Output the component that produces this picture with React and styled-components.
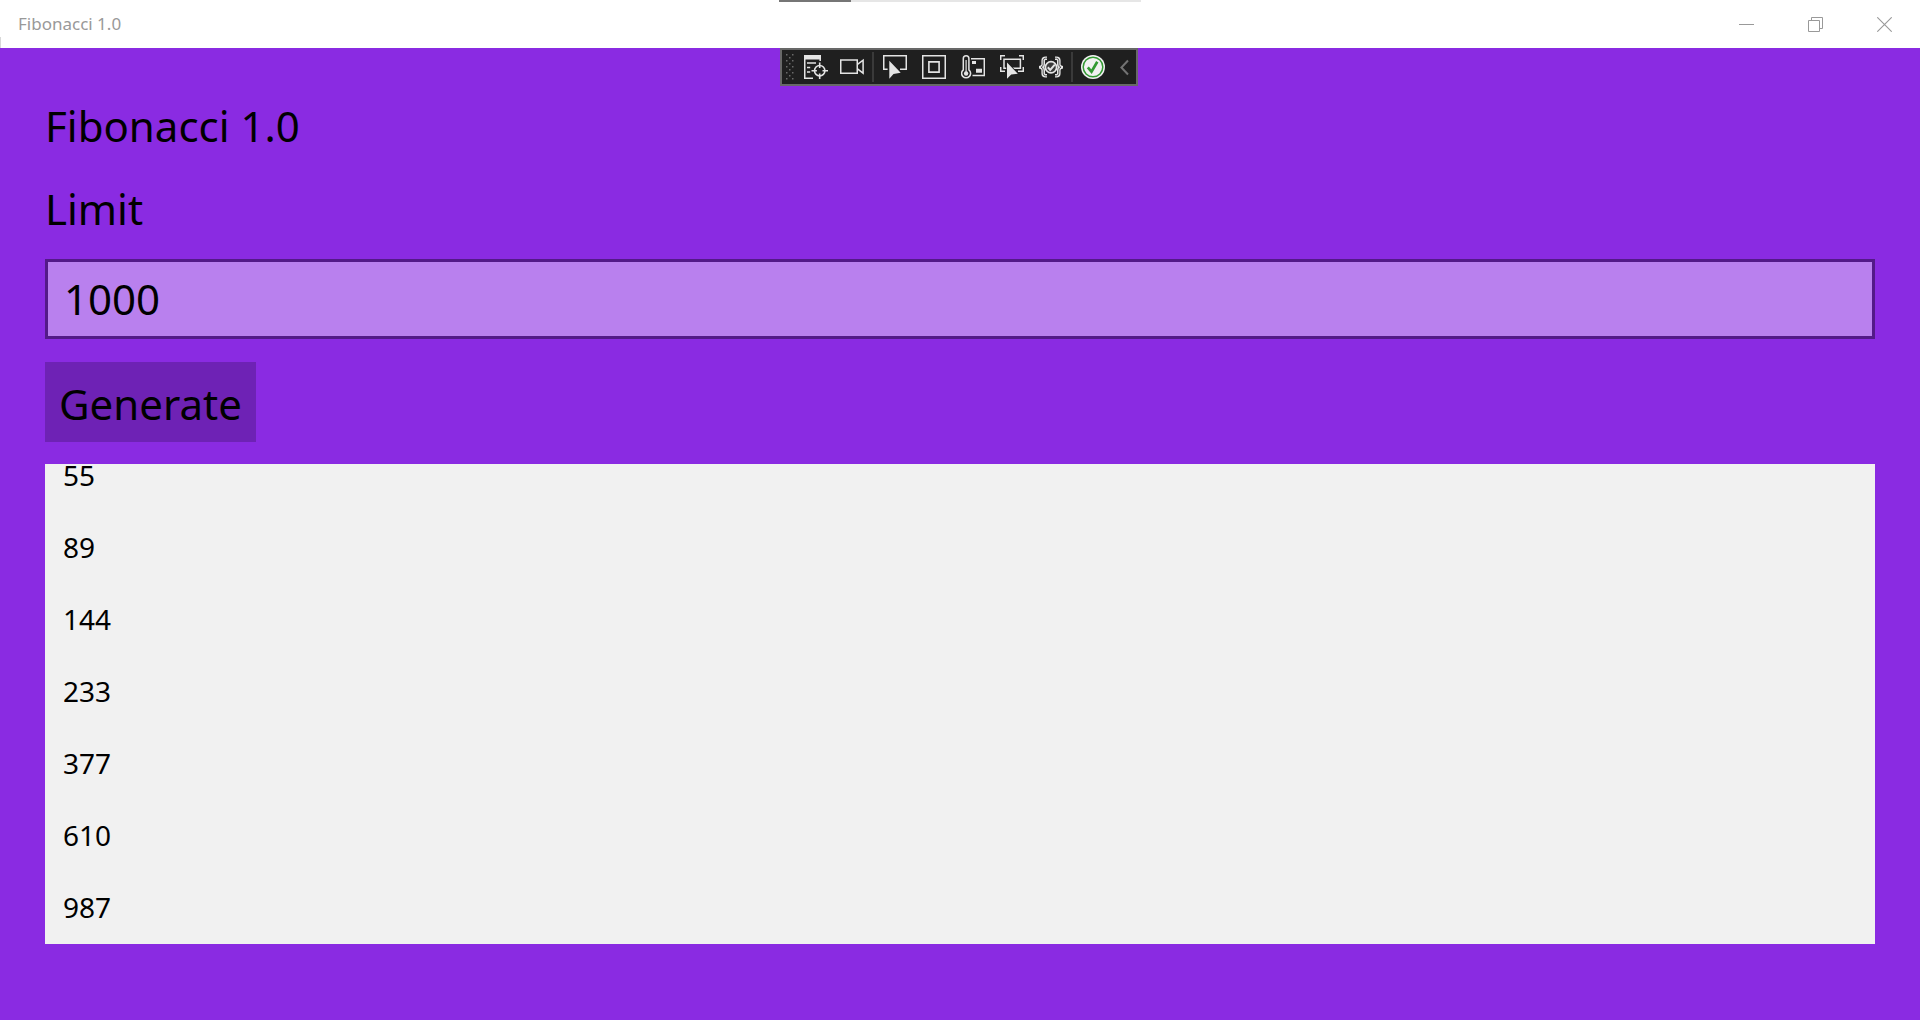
import React, { useState } from "react";
import styled, { createGlobalStyle } from "styled-components";

const GlobalStyle = createGlobalStyle`
  *, *::before, *::after { box-sizing: border-box; }
  body { margin: 0; }
  button, input { font-family: inherit; }
`;

const Window = styled.div`
  position: relative;
  display: flex;
  flex-direction: column;
  height: 100vh;
  background: #8a2be2;
  color: #000;
  font-family: "Noto Sans", "Open Sans", sans-serif;
`;

const TitleBar = styled.header`
  position: relative;
  display: flex;
  align-items: center;
  justify-content: space-between;
  flex: none;
  height: 48px;
  padding: 0 1px 0 18px;
  background: #fff;

  &::after {
    content: "";
    position: absolute;
    left: 0;
    bottom: 0;
    width: 1px;
    height: 11px;
    background: #d8d8d8;
  }
`;

const WindowTitle = styled.span`
  font-size: 17px;
  line-height: 24px;
  color: #999;
`;

const WindowButtons = styled.div`
  display: flex;
`;

const WindowButton = styled.button`
  display: flex;
  align-items: center;
  justify-content: center;
  width: 69px;
  height: 48px;
  padding: 0;
  border: 0;
  background: transparent;
  color: #999;
`;

const Overlay = styled.div`
  position: absolute;
  top: 48px;
  left: 50%;
  width: 360px;
  transform: translateX(-50%);
`;

const LoadTrack = styled.div`
  position: absolute;
  top: 0;
  left: 50%;
  width: 362px;
  height: 2px;
  transform: translateX(-50%);
  background: #e6e6e6;
`;

const LoadValue = styled.div`
  width: 20%;
  height: 2px;
  background: #767676;
`;

const DebugBar = styled.div`
  display: flex;
  align-items: center;
  width: 358px;
  height: 38px;
  padding-left: 3px;
  border: 2px solid #686868;
  background: #1f1f1f;

  > * {
    flex: none;
  }
`;

const ToolGroup = styled.div`
  display: flex;
  gap: ${(p) => p.$gap}px;
  padding: 0 8px 0 ${(p) => p.$start}px;
`;

const ToolButton = styled.button`
  display: flex;
  padding: 0;
  border: 0;
  background: transparent;
  color: #e4e4e4;
`;

const Divider = styled.div`
  width: 2px;
  height: 30px;
  background: #3a3a3a;
`;

const Page = styled.main`
  display: flex;
  flex-direction: column;
  align-items: flex-start;
  flex: 1;
  min-height: 0;
  padding: 48px 45px 76px;
`;

const Heading = styled.h1`
  margin: 0 0 23px;
  font-size: 42px;
  font-weight: 400;
  line-height: 60px;
`;

const FieldLabel = styled.label`
  margin-bottom: 20px;
  font-size: 42px;
  line-height: 60px;
`;

const LimitInput = styled.input`
  width: 100%;
  height: 80px;
  margin-bottom: 23px;
  padding: 0 16px 2px;
  border: 3px solid #531a88;
  border-radius: 0;
  outline: 0;
  background: #b980ee;
  color: #000;
  font-size: 42px;
`;

const GenerateButton = styled.button`
  height: 80px;
  margin-bottom: 22px;
  padding: 2px 14px 0;
  border: 0;
  background: #6e22b5;
  color: #000;
  font-size: 42px;
`;

const Results = styled.ul`
  display: flex;
  flex-direction: column;
  justify-content: flex-end;
  align-self: stretch;
  flex: 1 1 0;
  min-height: 0;
  margin: 0;
  padding: 0;
  overflow: hidden;
  background: #f1f1f1;
  list-style: none;
`;

const ResultRow = styled.li`
  flex: none;
  padding: 0 18px 2px;
  font-size: 28px;
  line-height: 70px;
`;

const Icon = ({ children, width = 24, height = 24 }) => (
  <svg
    width={width}
    height={height}
    viewBox={`0 0 ${width} ${height}`}
    fill="none"
    stroke="currentColor"
    strokeWidth="1.5"
    aria-hidden="true"
  >
    {children}
  </svg>
);

const GripDots = () => (
  <Icon width={9} height={26}>
    <g fill="#6a6a6a" stroke="none">
      {[0, 6, 12, 18, 24].map((y) => (
        <g key={y}>
          <rect x="1" y={y} width="1.5" height="1.5" />
          <rect x="7" y={y} width="1.5" height="1.5" />
          {y < 24 && <rect x="4" y={y + 3} width="1.5" height="1.5" />}
        </g>
      ))}
    </g>
  </Icon>
);

const TreeIcon = () => (
  <Icon>
    <rect x="0" y="0" width="17" height="4.5" fill="currentColor" stroke="none" />
    <path d="M.75 4v19.2H9M16.2 4v2M3 8h9M3 12.6h3.2M3 17h3.2" />
    <circle cx="15.7" cy="15.7" r="5.2" strokeWidth="1.6" />
    <path d="M15.7 7.5v5.4M15.7 18.5V24M7.5 15.7h5.4M18.5 15.7H24" strokeWidth="1.6" />
  </Icon>
);

const CameraIcon = () => (
  <Icon>
    <path d="M.75 5h16.5v13.2H.75z" />
    <path d="M17.5 9.4l5.6-4.2v13l-5.6-4.4" />
  </Icon>
);

const SelectElementIcon = () => (
  <Icon>
    <path d="M4.6 14.3H.75V.75h22.5V14.3H17" />
    <path d="M6.3 5.8v17.9l4.2-4.6 7.2-1.4z" fill="currentColor" stroke="none" />
  </Icon>
);

const LayoutIcon = () => (
  <Icon>
    <path d="M.75.75h22.5v22.5H.75z" />
    <path d="M6.9 6.9h10.2v10.2H6.9z" strokeWidth="1.6" />
  </Icon>
);

const ThermometerIcon = () => (
  <Icon>
    <path d="M2.3 3.6a2.8 2.8 0 0 1 5.6 0v11.2a4.5 4.5 0 1 1-5.6 0z" />
    <path d="M5.1 5v12" strokeWidth="1.2" />
    <circle cx="5.1" cy="18.5" r="2.2" fill="currentColor" stroke="none" />
    <path d="M10 3.7h13.3v16.8H11.5" />
    <path d="M11 6h4v3h-4zM15 13.8h6v4h-6z" fill="currentColor" stroke="none" />
  </Icon>
);

const FocusIcon = () => (
  <Icon>
    <path d="M.7 5V.7H5M19 .7h4.3V5M.7 12v4.3H5M23.3 12v4.3H18" />
    <path d="M4 13.3V4.3h16.4v9H4z" />
    <path
      d="M7 7.5v16.3l4.2-4.2 6.6-.8z"
      fill="currentColor"
      stroke="#1f1f1f"
      strokeWidth="1.6"
      paintOrder="stroke"
    />
  </Icon>
);

const bracePath =
  "M8 3.2H6.6Q4.2 3.2 4.2 5.6v3.6Q4.2 11.6 2 12.2 4.2 12.8 4.2 15.2v3Q4.2 20.8 6.6 20.8H8M16 3.2h1.4Q19.8 3.2 19.8 5.6v3.6Q19.8 11.6 22 12.2 19.8 12.8 19.8 15.2v3Q19.8 20.8 17.4 20.8H16";

const BracesIcon = () => (
  <Icon>
    <path d={bracePath} strokeWidth="3.6" />
    <path d={bracePath} stroke="#1f1f1f" strokeWidth="0.7" />
    <circle cx="12" cy="12.3" r="5.6" fill="#3a3a3a" strokeWidth="1.7" />
    <path d="M8.8 12.3l2.4 2.6 4.6-5.2" strokeWidth="2" />
  </Icon>
);

const StatusIcon = () => (
  <Icon>
    <circle cx="12" cy="12" r="12" fill="#f1f1f1" stroke="none" />
    <circle cx="12" cy="12" r="9.8" stroke="#339933" strokeWidth="1.5" />
    <path d="M6.8 12.4l3.7 4.2 5.8-9.8" stroke="#339933" strokeWidth="2.7" />
  </Icon>
);

const ChevronIcon = () => (
  <Icon width={9} height={24}>
    <path d="M8 5.5L1.4 12.5 8 19.5" stroke="#737373" strokeWidth="2" />
  </Icon>
);

const MinimizeIcon = () => (
  <Icon width={15} height={15}>
    <path d="M0 7.5h15" strokeWidth="1" />
  </Icon>
);

const RestoreIcon = () => (
  <Icon width={15} height={15}>
    <path d="M.5 3.5h11v11H.5zM3.5 3.5v-3h11v11h-3" strokeWidth="1" />
  </Icon>
);

const CloseIcon = () => (
  <Icon width={15} height={15}>
    <path d="M.3.3l14.4 14.4M14.7.3L.3 14.7" strokeWidth="1.1" />
  </Icon>
);

const treeTools = [
  ["Live Visual Tree", TreeIcon],
  ["Record", CameraIcon],
];

const inspectTools = [
  ["Select Element", SelectElementIcon],
  ["Display Layout Adorners", LayoutIcon],
  ["Performance", ThermometerIcon],
  ["Track Focused Element", FocusIcon],
  ["Binding Failures", BracesIcon],
];

const statusTools = [
  ["Hot Reload", StatusIcon],
  ["Collapse", ChevronIcon],
];

const windowTools = [
  ["Minimize", MinimizeIcon],
  ["Restore", RestoreIcon],
  ["Close", CloseIcon],
];

const Tools = ({ items, gap, start }) => (
  <ToolGroup $gap={gap} $start={start}>
    {items.map(([name, Glyph]) => (
      <ToolButton key={name} type="button" aria-label={name}>
        <Glyph />
      </ToolButton>
    ))}
  </ToolGroup>
);

const numbers = [55, 89, 144, 233, 377, 610, 987];

export default function App() {
  const [limit, setLimit] = useState("1000");

  return (
    <>
      <GlobalStyle />
      <Window>
        <TitleBar>
          <WindowTitle>Fibonacci 1.0</WindowTitle>
          <LoadTrack>
            <LoadValue />
          </LoadTrack>
          <WindowButtons>
            {windowTools.map(([name, Glyph]) => (
              <WindowButton key={name} type="button" aria-label={name}>
                <Glyph />
              </WindowButton>
            ))}
          </WindowButtons>
        </TitleBar>
        <Page>
          <Heading>Fibonacci 1.0</Heading>
          <FieldLabel htmlFor="limit">Limit</FieldLabel>
          <LimitInput
            id="limit"
            type="text"
            value={limit}
            onChange={(e) => setLimit(e.target.value)}
          />
          <GenerateButton type="button">Generate</GenerateButton>
          <Results>
            {numbers.map((n) => (
              <ResultRow key={n}>{n}</ResultRow>
            ))}
          </Results>
        </Page>
        <Overlay>
          <DebugBar>
            <GripDots />
            <Tools items={treeTools} gap={12} start={10} />
            <Divider />
            <Tools items={inspectTools} gap={15} start={9} />
            <Divider />
            <Tools items={statusTools} gap={15} start={8} />
          </DebugBar>
        </Overlay>
      </Window>
    </>
  );
}
